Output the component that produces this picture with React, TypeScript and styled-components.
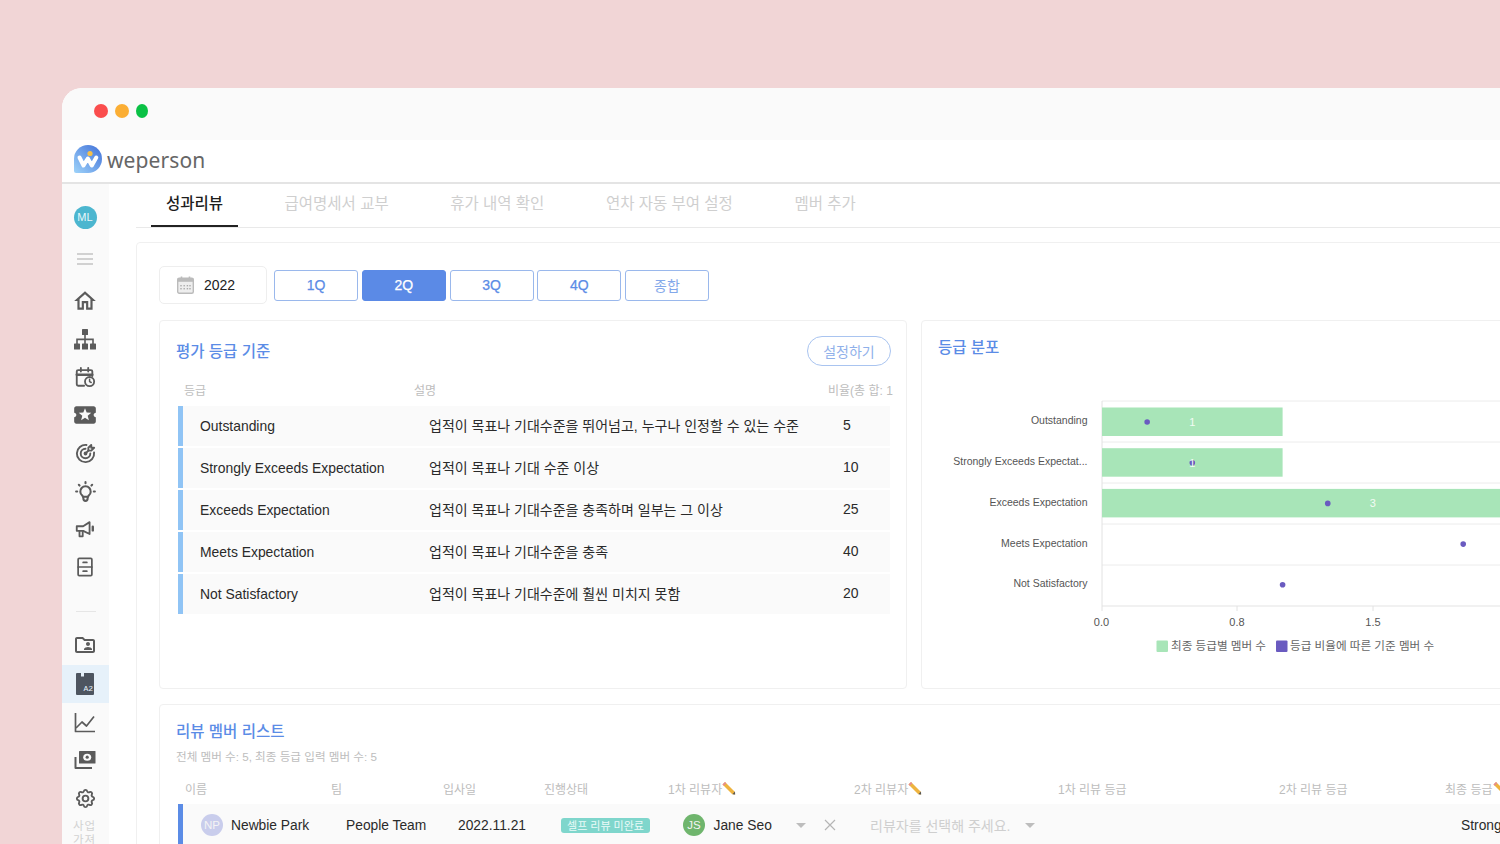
import React from "react";
import styled, { createGlobalStyle } from "styled-components";
import { MdLocalActivity, MdOutlineFolderShared, MdOutlineHome } from "react-icons/md";
import { TbTargetArrow, TbBulb, TbSettings } from "react-icons/tb";

const FONT = `"Liberation Sans", "Noto Sans CJK KR", sans-serif`;

const Global = createGlobalStyle`
  html, body { margin: 0; padding: 0; background: #f1d5d6; }
  * { box-sizing: border-box; }
  body { font-family: ${FONT}; }
`;

const Page = styled.div`
  width: 1500px; height: 844px; overflow: hidden; background: #f1d5d6;
  padding: 88px 0 0 62px;
`;
const Win = styled.div`
  width: 1438px; height: 756px; background: #fff; border-radius: 20px 0 0 0; overflow: hidden;
  display: flex; flex-direction: column;
`;
const TitleBar = styled.div`
  height: 52px; flex: none; background: #fafafa; display: flex; align-items: center;
  padding: 0 0 6px 32px; gap: 7px;
`;
const Dot = styled.span<{ $c: string; $w?: number }>`
  width: ${(p) => p.$w ?? 14}px; height: 14px; border-radius: 50%; background: ${(p) => p.$c};
`;
const Header = styled.div`
  height: 44px; flex: none; background: #fff; border-bottom: 2px solid #e4e4e4;
  display: flex; align-items: center; padding: 0 0 4px 11px; gap: 4px;
`;
const Brand = styled.span`
  font-family: "Noto Sans", sans-serif; font-size: 21px; line-height: 28px; color: #666;
  letter-spacing: 0.1px; margin-top: 2px;
`;
const Body = styled.div`
  flex: 1; display: flex; min-height: 0;
`;
const Side = styled.div`
  width: 47px; flex: none; background: #fafafa; padding-top: 14px; display: flex; flex-direction: column;
`;
const Item = styled.div<{ $active?: boolean; $mt?: number }>`
  height: 38px; flex: none; display: flex; align-items: center; justify-content: center;
  padding-right: 1px;
  color: #5b5b5b; margin-top: ${(p) => p.$mt ?? 0}px;
  background: ${(p) => (p.$active ? "#e6f1fa" : "transparent")};
`;
const SideAvatar = styled.span`
  width: 23px; height: 23px; border-radius: 50%; background: #4cb6cf; color: #e8f6fa;
  font-size: 11px; display: flex; align-items: center; justify-content: center;
`;
const SideDivider = styled.div`
  height: 40px; flex: none; display: flex; align-items: center; justify-content: center; padding: 10px 0 0;
  &::after { content: ""; width: 20px; height: 1px; background: #e6e6e6; }
`;
const SideText = styled.div`
  font-size: 11.5px; line-height: 13.5px; color: #d2d2d2; text-align: center; width: 45px; margin-top: 3px;
  letter-spacing: 1px;
`;
const Main = styled.div`
  flex: none; width: 1391px; padding-left: 27px;
`;
const Tabs = styled.div`
  height: 44px; border-bottom: 1px solid #e9e9e9; display: flex; padding-left: 15px; gap: 31.5px;
`;
const Tab = styled.div<{ $active?: boolean }>`
  height: 43px; padding: 0 15px 5px; display: flex; align-items: center; font-size: 15.5px;
  color: ${(p) => (p.$active ? "#1d1d1d" : "#cfcfcf")};
  font-weight: ${(p) => (p.$active ? 500 : 400)};
  border-bottom: 2px solid ${(p) => (p.$active ? "#222" : "transparent")};
  white-space: nowrap;
`;
const Card = styled.div`
  margin-top: 14px; border: 1px solid #f0f0f0; border-radius: 4px; padding: 23px 0 0 22px; width: 1400px;
`;
const Toolbar = styled.div`
  display: flex; align-items: center; height: 38px;
`;
const DateBox = styled.div`
  width: 108px; height: 38px; border: 1px solid #eee; border-radius: 5px; display: flex; align-items: center;
  padding-left: 17px; gap: 10px; font-size: 14px; color: #222; margin-right: 7px;
`;
const QGroup = styled.div`
  display: flex; gap: 3.75px;
`;
const QBtn = styled.div<{ $on?: boolean; $muted?: boolean }>`
  width: 84px; height: 31px; border-radius: 3px; border: 1px solid ${(p) => (p.$on ? "#5b8ae6" : "#9ab8ec")};
  background: ${(p) => (p.$on ? "#5b8ae6" : "#fff")};
  color: ${(p) => (p.$on ? "#fff" : p.$muted ? "#83a8ea" : "#5b8ce6")};
  font-size: 14px; -webkit-text-stroke: ${(p) => (p.$muted ? 0 : 0.25)}px;
  display: flex; align-items: center; justify-content: center;
`;
const PanelRow = styled.div`
  display: flex; gap: 14px; margin-top: 16px;
`;
const Panel = styled.div<{ $w: number; $h?: number }>`
  width: ${(p) => p.$w}px; flex: none; ${(p) => (p.$h ? `height: ${p.$h}px;` : "")}
  border: 1px solid #f0f0f0; border-radius: 4px; padding: 15px 16px 0;
`;
const PanelHead = styled.div`
  display: flex; align-items: center; justify-content: space-between; margin-right: -1px;
`;
const Title = styled.div<{ $mt?: number }>`
  font-size: 15.5px; line-height: 22px; font-weight: 500; color: #5b8ce6; margin-top: ${(p) => p.$mt ?? 0}px;
`;
const SetBtn = styled.div`
  width: 84px; height: 30px; border: 1px solid #a9c4f0; border-radius: 15px; color: #8fb0ea; font-size: 14px;
  display: flex; align-items: center; justify-content: center;
`;
const GradeTable = styled.div`
  margin: 14px 0 0 2px; width: 712px;
`;
const GradeHead = styled.div`
  display: grid; grid-template-columns: 230px 414px 69px; height: 20px; align-items: center; margin: -1px 0 7px -1px;
`;
const HeadCell = styled.div`
  padding-left: 7px; font-size: 12px; color: #bdbdbd; white-space: nowrap; display: flex; align-items: center;
`;
const GradeRow = styled.div`
  display: grid; grid-template-columns: 225px 414px 68px; height: 40px; margin-bottom: 2px; background: #fafafa;
  border-left: 5px solid #90c4f5; align-items: center; font-size: 13.9px; color: #2a2a2a;
`;
const GradeName = styled.div`
  padding-left: 17px; white-space: nowrap;
`;
const GradeCell = styled.div`
  padding-left: 21px; white-space: nowrap; position: relative; top: -1px; font-size: 14px;
`;
const ChartSvg = styled.svg`
  display: block; margin: 21px 0 0 -16px; font-family: ${FONT};
`;
const ListPanel = styled.div`
  margin-top: 15px; width: 1400px; border: 1px solid #f0f0f0; border-radius: 4px; padding: 16px 16px 0; height: 200px;
`;
const Sub = styled.div`
  margin-top: 6px; font-size: 11.6px; line-height: 16px; color: #bdbdbd;
`;
const COLS = "146px 112px 101px 124px 186px 204px 221px 166px 200px";
const ListHead = styled.div`
  display: grid; grid-template-columns: ${COLS}; height: 20px; margin: 13px 0 6px 2px; align-items: center;
`;
const ListRow = styled.div`
  display: grid; grid-template-columns: ${COLS}; height: 42px; margin-left: 2px; background: #fafafa; align-items: center;
  font-size: 13.8px; color: #2a2a2a;
`;
const Cell = styled.div<{ $pl?: number }>`
  padding-left: ${(p) => p.$pl ?? 22}px; display: flex; align-items: center; white-space: nowrap;
`;
const NameCell = styled(Cell)`
  padding-left: 18px; border-left: 5px solid #5b8ce6; height: 42px; gap: 8px;
`;
const Avatar = styled.span<{ $c: string }>`
  width: 22px; height: 22px; border-radius: 50%; background: ${(p) => p.$c}; color: #f4f4f4; font-size: 11.5px;
  display: flex; align-items: center; justify-content: center; flex: none;
`;
const Badge = styled.span`
  height: 15px; width: 89px; margin-left: 2px; background: #7fd6cc; color: #eafaf8; border-radius: 3px; font-size: 11px;
  display: flex; align-items: center; justify-content: center;
`;
const Reviewer = styled(Cell)`
  gap: 8.5px;
`;
const Caret = styled.span<{ $ml: number }>`
  width: 0; height: 0; border-left: 5px solid transparent; border-right: 5px solid transparent;
  border-top: 5px solid #bdbdbd; margin-left: ${(p) => p.$ml}px; flex: none;
`;
const Placeholder = styled.span`
  color: #cfcfcf; font-size: 14px;
`;
const CloseIcon = styled.svg`
  margin-left: 9px; flex: none;
`;

const IC = { width: 22, height: 22, viewBox: "0 0 24 24", fill: "none", stroke: "currentColor", strokeWidth: 2, strokeLinecap: "round" as const, strokeLinejoin: "round" as const };

const Logo = () => (
  <svg width="30" height="30" viewBox="0 0 30 30">
    <defs>
      <linearGradient id="lg" x1="0" y1="1" x2="1" y2="0">
        <stop offset="0" stopColor="#9fd4fa" />
        <stop offset="1" stopColor="#3f6fd8" />
      </linearGradient>
    </defs>
    <path d="M15 1a14 14 0 1 1 0 28H3a2 2 0 0 1-2-2V15A14 14 0 0 1 15 1z" fill="url(#lg)" />
    <path d="M6.5 13.5l4 8 4.3-7 4 7 4.5-8" fill="none" stroke="#fff" strokeWidth="4" strokeLinecap="round" strokeLinejoin="round" />
    <circle cx="17" cy="9.5" r="2.6" fill="#f5c04a" />
  </svg>
);
const Hamburger = () => (
  <svg width="18" height="14" viewBox="0 0 18 14" stroke="#c4c4c4" strokeWidth="1.5">
    <path d="M1 2h16M1 7h16M1 12h16" />
  </svg>
);
const OrgChart = () => (
  <svg width="22" height="21" viewBox="0 0 22 21" fill="currentColor">
    <rect x="8" y="0" width="6" height="6" rx="0.6" />
    <rect x="0" y="14.5" width="6" height="6" rx="0.6" />
    <rect x="8" y="14.5" width="6" height="6" rx="0.6" />
    <rect x="16" y="14.5" width="6" height="6" rx="0.6" />
    <path d="M10.2 5h1.6v4.6H19.8v5.4h-1.6v-3.8H11.8v3.8h-1.6v-3.8H3.8v3.8H2.2V9.6h8z" />
  </svg>
);
const CalClock = () => (
  <svg {...IC}>
    <path d="M20 11V6a1.5 1.5 0 0 0-1.5-1.5h-14A1.5 1.5 0 0 0 3 6v14a1.5 1.5 0 0 0 1.5 1.5H11" />
    <path d="M7.5 2v4M15.5 2v4" />
    <path d="M3 9.5h17" strokeWidth="2.6" />
    <circle cx="17" cy="17" r="5" />
    <path d="M17 14.5V17l1.8 1" strokeWidth="1.6" />
  </svg>
);
const Mega = () => (
  <svg {...IC}>
    <path d="M3 9h7l7-4.5v13L10 14H3z" />
    <path d="M6 14v6h3.5v-6" />
    <path d="M20.5 9.5v4" strokeWidth="2.6" />
  </svg>
);
const Cabinet = () => (
  <svg {...IC} strokeWidth={1.9}>
    <rect x="4.5" y="2.5" width="15" height="19" rx="1.2" />
    <path d="M4.5 12h15M10 7h4M10 16.5h4" />
  </svg>
);
const Sorted = () => (
  <svg width="20" height="24" viewBox="0 0 20 24">
    <path d="M2 1h4v3.5h3V1h9a1 1 0 0 1 1 1v20a1 1 0 0 1-1 1H2a1 1 0 0 1-1-1V2a1 1 0 0 1 1-1z" fill="#4d5560" />
    <text x="8.5" y="19" fontSize="8" fill="#e6f1fa" fontFamily={`"Liberation Mono", monospace`}>A2</text>
  </svg>
);
const LineChartIcon = () => (
  <svg width="22" height="21" viewBox="0 0 22 21" fill="none" stroke="currentColor" strokeWidth="1.7" strokeLinejoin="round">
    <path d="M1.5 1v18.5H21" />
    <path d="M2 16l6-6 4.5 4L20 4.5" />
  </svg>
);
const Cash = () => (
  <svg width="22" height="20" viewBox="0 0 22 20" fill="none">
    <rect x="5" y="1" width="16.5" height="12.5" rx="0.6" fill="currentColor" />
    <ellipse cx="13.2" cy="7.2" rx="4" ry="3.5" fill="#fafafa" />
    <circle cx="13.2" cy="7.2" r="1.6" fill="currentColor" />
    <path d="M1.5 7v11h16.5" stroke="currentColor" strokeWidth="2" strokeLinejoin="round" />
  </svg>
);
const CalIcon = () => (
  <svg width="17" height="18" viewBox="0 0 17 18">
    <rect x="0.7" y="2.2" width="15.6" height="15" rx="1.5" fill="#eee" stroke="#bbb" strokeWidth="1.4" />
    <rect x="0.7" y="2.2" width="15.6" height="3.6" fill="#bbb" />
    <path d="M4.5 0.5v3M12.5 0.5v3" stroke="#bbb" strokeWidth="1.6" />
    <g fill="#aaa">
      {[4, 7.2, 10.4, 13].map((x) => [9, 12].map((y) => <rect key={`${x}-${y}`} x={x - 0.7} y={y} width="1.4" height="1.4" />))}
    </g>
  </svg>
);
const Pencil = () => (
  <svg width="14" height="14" viewBox="0 0 14 14">
    <path d="M3 1l10 10-.3 2.7L10 13 0.5 3.5z" fill="#eeb33f" />
    <path d="M0.5 3.5L3 1l1.3 1.3-2.5 2.5z" fill="#e58b92" />
    <path d="M10.4 13.2l2.6-2.6.2 3z" fill="#555" />
  </svg>
);

const grades: [string, string, string][] = [
  ["Outstanding", "업적이 목표나 기대수준을 뛰어넘고, 누구나 인정할 수 있는 수준", "5"],
  ["Strongly Exceeds Expectation", "업적이 목표나 기대 수준 이상", "10"],
  ["Exceeds Expectation", "업적이 목표나 기대수준을 충족하며 일부는 그 이상", "25"],
  ["Meets Expectation", "업적이 목표나 기대수준을 충족", "40"],
  ["Not Satisfactory", "업적이 목표나 기대수준에 훨씬 미치지 못함", "20"],
];

const chartRows = [
  { label: "Outstanding", ly: 420, bar: 1, dot: 0.25 },
  { label: "Strongly Exceeds Expectat...", ly: 461, bar: 1, dot: 0.5 },
  { label: "Exceeds Expectation", ly: 502, bar: 3, dot: 1.25 },
  { label: "Meets Expectation", ly: 543, bar: 0, dot: 2 },
  { label: "Not Satisfactory", ly: 583, bar: 0, dot: 1 },
];
const X0 = 1102;
const UNIT = 180.6;

const Chart = () => (
  <ChartSvg width="700" height="300" viewBox="922 380 700 300">
    {[401, 442, 483, 524, 565, 606].map((y) => (
      <line key={y} x1={X0} x2="1622" y1={y} y2={y} stroke="#ececec" strokeWidth={y === 606 ? 1.5 : 1} />
    ))}
    <line x1={X0} x2={X0} y1="401" y2="611" stroke="#e2e2e2" />
    {[1237, 1373].map((x) => (
      <line key={x} x1={x} x2={x} y1="606" y2="611" stroke="#e2e2e2" />
    ))}
    {chartRows.map((r, i) => {
      const top = 407.5 + i * 40.7;
      return (
        <g key={r.label}>
          <text x="1087.5" y={r.ly + 3.5} textAnchor="end" fontSize="10.5" fill="#555">{r.label}</text>
          {r.bar > 0 && <rect x={X0} y={top} width={r.bar * UNIT} height="28.5" fill="#a8e5b8" />}
          <circle cx={X0 + r.dot * UNIT} cy={top + 14.5} r="2.8" fill="#6a5bc0" />
          {r.bar > 0 && (
            <text x={X0 + (r.bar * UNIT) / 2} y={top + 18.5} textAnchor="middle" fontSize="11" fill="#f3fbf5">{r.bar}</text>
          )}
        </g>
      );
    })}
    {[["0.0", 1101.5], ["0.8", 1237], ["1.5", 1373]].map(([t, x]) => (
      <text key={t} x={x} y="626" textAnchor="middle" fontSize="11" fill="#555">{t}</text>
    ))}
    <rect x="1156.5" y="640.5" width="11.5" height="11.5" rx="1" fill="#a8e5b8" />
    <text x="1171" y="650" fontSize="11.6" fill="#666">최종 등급별 멤버 수</text>
    <rect x="1276" y="640.5" width="11.5" height="11.5" rx="1" fill="#6a5bc0" />
    <text x="1290" y="650" fontSize="11.6" fill="#666">등급 비율에 따른 기준 멤버 수</text>
  </ChartSvg>
);

export default function App() {
  return (
    <>
      <Global />
      <Page>
        <Win>
          <TitleBar>
            <Dot $c="#fa4d4d" />
            <Dot $c="#fbae34" />
            <Dot $c="#0ac145" $w={12} />
          </TitleBar>
          <Header>
            <Logo />
            <Brand>weperson</Brand>
          </Header>
          <Body>
            <Side>
              <Item><SideAvatar>ML</SideAvatar></Item>
              <Item $mt={4}><Hamburger /></Item>
              <Item $mt={4}><MdOutlineHome size={26} /></Item>
              <Item><OrgChart /></Item>
              <Item><CalClock /></Item>
              <Item><MdLocalActivity size={26} /></Item>
              <Item><TbTargetArrow size={23} /></Item>
              <Item><TbBulb size={25} /></Item>
              <Item><Mega /></Item>
              <Item><Cabinet /></Item>
              <SideDivider />
              <Item><MdOutlineFolderShared size={24} /></Item>
              <Item $active $mt={1}><Sorted /></Item>
              <Item><LineChartIcon /></Item>
              <Item><Cash /></Item>
              <Item><TbSettings size={23} /></Item>
              <SideText>사업<br />가져</SideText>
            </Side>
            <Main>
              <Tabs>
                <Tab $active>성과리뷰</Tab>
                <Tab>급여명세서 교부</Tab>
                <Tab>휴가 내역 확인</Tab>
                <Tab>연차 자동 부여 설정</Tab>
                <Tab>멤버 추가</Tab>
              </Tabs>
              <Card>
                <Toolbar>
                  <DateBox><CalIcon />2022</DateBox>
                  <QGroup>
                    <QBtn>1Q</QBtn>
                    <QBtn $on>2Q</QBtn>
                    <QBtn>3Q</QBtn>
                    <QBtn>4Q</QBtn>
                    <QBtn $muted>종합</QBtn>
                  </QGroup>
                </Toolbar>
                <PanelRow>
                  <Panel $w={748} $h={369}>
                    <PanelHead>
                      <Title $mt={1}>평가 등급 기준</Title>
                      <SetBtn>설정하기</SetBtn>
                    </PanelHead>
                    <GradeTable>
                      <GradeHead>
                        <HeadCell>등급</HeadCell>
                        <HeadCell>설명</HeadCell>
                        <HeadCell>비율(총 합: 1</HeadCell>
                      </GradeHead>
                      {grades.map(([n, d, v]) => (
                        <GradeRow key={n}>
                          <GradeName>{n}</GradeName>
                          <GradeCell>{d}</GradeCell>
                          <GradeCell>{v}</GradeCell>
                        </GradeRow>
                      ))}
                    </GradeTable>
                  </Panel>
                  <Panel $w={640} $h={369}>
                    <Title $mt={1}>등급 분포</Title>
                    <Chart />
                  </Panel>
                </PanelRow>
                <ListPanel>
                  <Title>리뷰 멤버 리스트</Title>
                  <Sub>전체 멤버 수: 5, 최종 등급 입력 멤버 수: 5</Sub>
                  <ListHead>
                    <HeadCell>이름</HeadCell>
                    <HeadCell>팀</HeadCell>
                    <HeadCell>입사일</HeadCell>
                    <HeadCell>진행상태</HeadCell>
                    <HeadCell>1차 리뷰자<Pencil /></HeadCell>
                    <HeadCell>2차 리뷰자<Pencil /></HeadCell>
                    <HeadCell>1차 리뷰 등급</HeadCell>
                    <HeadCell>2차 리뷰 등급</HeadCell>
                    <HeadCell>최종 등급<Pencil /></HeadCell>
                  </ListHead>
                  <ListRow>
                    <NameCell><Avatar $c="#c9cdec">NP</Avatar>Newbie Park</NameCell>
                    <Cell>People Team</Cell>
                    <Cell>2022.11.21</Cell>
                    <Cell><Badge>셀프 리뷰 미완료</Badge></Cell>
                    <Reviewer>
                      <Avatar $c="#6fb56d">JS</Avatar>Jane Seo
                      <Caret $ml={16} />
                      <CloseIcon width="12" height="12" viewBox="0 0 12 12" stroke="#b5b5b5" strokeWidth="1.2">
                        <path d="M1 1l10 10M11 1L1 11" />
                      </CloseIcon>
                    </Reviewer>
                    <Cell $pl={23}><Placeholder>리뷰자를 선택해 주세요.</Placeholder><Caret $ml={15} /></Cell>
                    <Cell />
                    <Cell />
                    <Cell $pl={23}>Strongly Exceeds</Cell>
                  </ListRow>
                </ListPanel>
              </Card>
            </Main>
          </Body>
        </Win>
      </Page>
    </>
  );
}
